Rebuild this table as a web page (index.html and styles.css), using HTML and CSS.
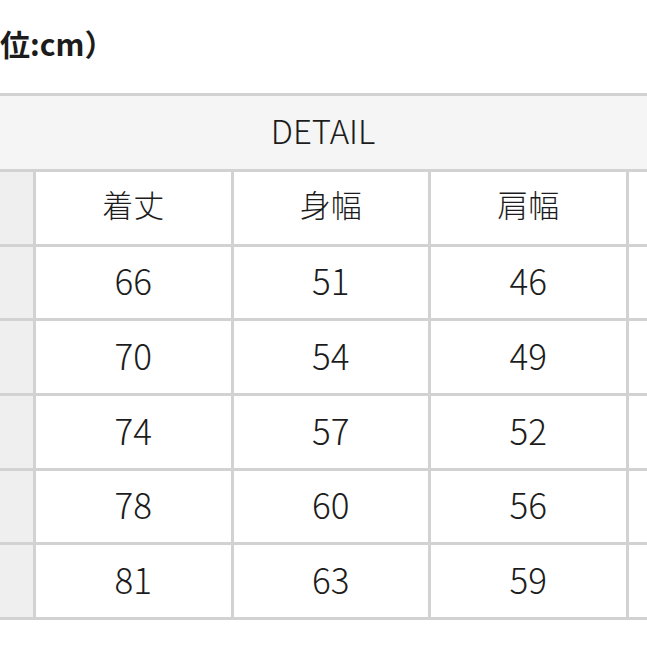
FILE: index.html
```html
<!DOCTYPE html>
<html lang="ja">
<head>
<meta charset="utf-8">
<link rel="stylesheet" href="styles.css">
</head>
<body>
<div class="page">
  <p class="unit">（単位:cm）</p>
  <div class="size-table">
    <div class="cell head">DETAIL</div>

    <div class="cell label titles"></div>
    <div class="cell titles">着丈</div>
    <div class="cell titles">身幅</div>
    <div class="cell titles">肩幅</div>
    <div class="cell titles">袖丈</div>

    <div class="cell label">S</div>
    <div class="cell num">66</div>
    <div class="cell num">51</div>
    <div class="cell num">46</div>
    <div class="cell num"></div>

    <div class="cell label">M</div>
    <div class="cell num">70</div>
    <div class="cell num">54</div>
    <div class="cell num">49</div>
    <div class="cell num"></div>

    <div class="cell label">L</div>
    <div class="cell num">74</div>
    <div class="cell num">57</div>
    <div class="cell num">52</div>
    <div class="cell num"></div>

    <div class="cell label">XL</div>
    <div class="cell num">78</div>
    <div class="cell num">60</div>
    <div class="cell num">56</div>
    <div class="cell num"></div>

    <div class="cell label">XXL</div>
    <div class="cell num">81</div>
    <div class="cell num">63</div>
    <div class="cell num">59</div>
    <div class="cell num"></div>
  </div>
</div>
</body>
</html>
```

FILE: styles.css
```css
html, body {
  margin: 0;
  padding: 0;
  background: #ffffff;
  overflow: hidden;
}

.page {
  width: 647px;
  height: 647px;
  overflow: hidden;
  font-family: "Noto Sans CJK JP", "Noto Sans", sans-serif;
  color: #1c1c1c;
}

.unit {
  margin: 0 0 30px -60px;
  padding-top: 23px;
  height: 40px;
  line-height: 40px;
  font-size: 30px;
  font-weight: 700;
  white-space: nowrap;
}

.size-table {
  display: grid;
  grid-template-columns: 210px 194.5px 194.5px 194.5px 194.5px;
  grid-template-rows: 73px repeat(6, 71.67px);
  gap: 3px;
  padding: 3px;
  width: max-content;
  margin-left: -180px;
  background: #d2d2d2;
}

.cell {
  display: flex;
  align-items: center;
  justify-content: center;
  padding-bottom: 5px;
  box-sizing: border-box;
  background: #ffffff;
  font-size: 33px;
  font-weight: 300;
  line-height: 1;
}

.head {
  grid-column: 1 / -1;
  background: #f5f5f5;
}

.titles {
  font-size: 31px;
  padding-bottom: 9px;
}

.num {
  font-size: 35px;
}

.label {
  background: #efefef;
}
```
